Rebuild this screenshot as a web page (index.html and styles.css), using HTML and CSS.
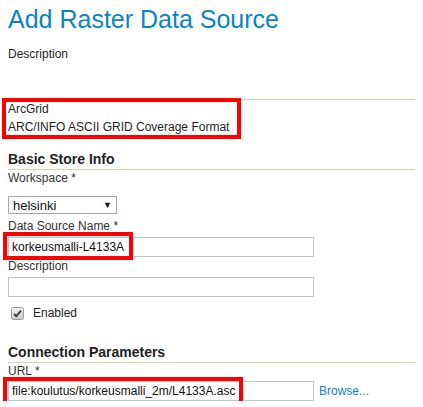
FILE: index.html
```html
<!DOCTYPE html>
<html>
<head>
<meta charset="utf-8">
<link rel="stylesheet" href="styles.css">
</head>
<body>
<h1 class="title">Add Raster Data Source</h1>
<p class="desc">Description</p>

<div class="format">
  <div class="format-text">
    <div class="line">ArcGrid</div>
    <div class="line">ARC/INFO ASCII GRID Coverage Format</div>
    <span class="mark mark-format"></span>
  </div>
</div>

<h3 class="section first">Basic Store Info</h3>
<div class="label">Workspace *</div>
<div class="select"><span>helsinki</span><span class="arrow">&#9660;</span></div>

<div class="label gap-sel">Data Source Name *</div>
<div class="field">
  <div class="input">korkeusmalli-L4133A</div>
  <span class="mark mark-name"></span>
</div>

<div class="label gap-in">Description</div>
<div class="field">
  <div class="input"></div>
</div>

<div class="check-row">
  <svg class="checkbox" width="13" height="13" viewBox="0 0 13 13">
    <defs>
      <linearGradient id="cb" x1="0" y1="0" x2="0" y2="1">
        <stop offset="0" stop-color="#f2f2f2"/>
        <stop offset="1" stop-color="#c9c9c9"/>
      </linearGradient>
    </defs>
    <rect x="0.5" y="0.5" width="12" height="12" rx="2" fill="url(#cb)" stroke="#9a9a9a"/>
    <path d="M3 6.8 L5.3 9.2 L10 3.6" fill="none" stroke="#3a3a3a" stroke-width="1.8"/>
  </svg>
  <span>Enabled</span>
</div>

<h3 class="section second">Connection Parameters</h3>
<div class="label">URL *</div>
<div class="url-row">
  <div class="field">
    <div class="input">file:koulutus/korkeusmalli_2m/L4133A.asc</div>
    <span class="mark mark-url"></span>
  </div>
  <a class="browse" href="#">Browse...</a>
</div>
</body>
</html>
```

FILE: styles.css
```css
html, body {
  margin: 0;
  padding: 0;
  background: #ffffff;
}
body {
  padding: 0 8px;
  font-family: "Liberation Sans", Arial, sans-serif;
  font-size: 12px;
  color: #1e1e1e;
  overflow: hidden;
}
.title {
  margin: 4px 0 0;
  font-size: 25px;
  line-height: 30px;
  font-weight: normal;
  color: #0b85c2;
}
.desc {
  margin: 12px 0 0;
  line-height: 16px;
}
.format {
  margin-top: 37px;
  border-top: 1px solid #c6dca4;
}
.format-text {
  position: relative;
  display: inline-block;
}
.line {
  line-height: 18px;
}
.mark {
  position: absolute;
  border: 4px solid #ff0000;
  box-sizing: border-box;
  pointer-events: none;
}
.mark-format {
  top: -2px;
  left: -6px;
  width: 239px;
  height: 41px;
}
.section {
  margin: 0;
  font-size: 14px;
  line-height: 18px;
  font-weight: bold;
  padding-bottom: 1px;
  border-bottom: 1px solid #c6dca4;
  color: #1e1e1e;
}
.section.first {
  margin-top: 14px;
}
.section.second {
  margin-top: 22px;
}
.label {
  line-height: 16px;
  color: #333333;
}
.gap-sel {
  margin-top: 4px;
}
.gap-in {
  margin-top: 1px;
}
.select {
  margin-top: 10px;
  width: 109px;
  height: 18px;
  box-sizing: border-box;
  border: 1px solid #a8a8a8;
  display: flex;
  align-items: center;
  justify-content: space-between;
  padding: 0 4px 0 4px;
  font-size: 13px;
  color: #111111;
}
.arrow {
  font-size: 9px;
  color: #111111;
}
.field {
  position: relative;
  width: 306px;
  margin-top: 3px;
}
.input {
  box-sizing: border-box;
  width: 306px;
  height: 20px;
  border: 1px solid #c4c4c4;
  padding: 0 3px;
  line-height: 18px;
  color: #111111;
  background: #ffffff;
}
.mark-name {
  top: -5px;
  left: -5px;
  width: 130px;
  height: 28px;
}
.mark-url {
  top: -4px;
  left: -5px;
  width: 240px;
  height: 28px;
}
.check-row {
  margin-top: 8px;
  display: flex;
  align-items: center;
  height: 16px;
  line-height: 16px;
}
.checkbox {
  margin-left: 3px;
  margin-right: 9px;
}
.url-row {
  display: flex;
  align-items: center;
  margin-top: 2px;
}
.url-row .field {
  margin-top: 0;
}
.browse {
  margin-left: 5px;
  color: #0b85c2;
  text-decoration: none;
}
```
